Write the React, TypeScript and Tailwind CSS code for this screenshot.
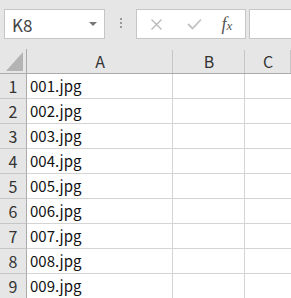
const rows = ["001.jpg", "002.jpg", "003.jpg", "004.jpg", "005.jpg", "006.jpg", "007.jpg", "008.jpg", "009.jpg"];

const font = { fontFamily: '"Noto Sans CJK JP", "Noto Sans", sans-serif' };

export default function App() {
  return (
    <div className="w-[291px] h-[298px] overflow-hidden bg-white text-[#222]" style={font}>
      {/* formula bar */}
      <div className="h-[49px] bg-[#e6e6e6] flex items-start pt-[9px] pl-[4px]">
        <div className="w-[101px] h-[30px] bg-white border border-[#c6c6c6] flex items-center justify-between pl-[7px] pr-[6px]">
          <span className="text-[17px] text-[#444] leading-none">K8</span>
          <svg width="10" height="6" viewBox="0 0 10 6">
            <path d="M1 1h8L5 5z" fill="#777" />
          </svg>
        </div>
        <div className="w-[31px] flex flex-col items-center gap-[2px] pt-[9px]">
          <span className="w-[2px] h-[2px] bg-[#9a9a9a]" />
          <span className="w-[2px] h-[2px] bg-[#9a9a9a]" />
          <span className="w-[2px] h-[2px] bg-[#9a9a9a]" />
        </div>
        <div className="w-[110px] h-[30px] bg-white border border-[#c6c6c6] flex items-center">
          <div className="w-[38px] flex justify-center">
            <svg width="13" height="13" viewBox="0 0 13 13">
              <path d="M1.5 1.5l10 10M11.5 1.5l-10 10" stroke="#b8b8b8" strokeWidth="1.3" />
            </svg>
          </div>
          <div className="w-[38px] flex justify-center">
            <svg width="15" height="12" viewBox="0 0 15 12">
              <path d="M1 6l4.5 4.5L14 1.5" stroke="#c2c2c2" strokeWidth="1.8" fill="none" />
            </svg>
          </div>
          <div className="flex-1 flex justify-center pr-[4px]">
            <span className="italic text-[18px] text-[#555] leading-none" style={{ fontFamily: '"Liberation Serif", serif' }}>
              f<span className="text-[13px]">x</span>
            </span>
          </div>
        </div>
        <div className="ml-[3px] flex-1 h-[30px] bg-white border border-[#c6c6c6] border-r-0" />
      </div>

      {/* sheet */}
      <div className="grid grid-cols-[27px_146px_72px_1fr]">
        <div className="h-[25px] bg-[#e6e6e6] border-b border-r border-[#ababab] flex items-end justify-end pr-[3px] pb-[2px]">
          <svg width="17" height="19" viewBox="0 0 17 19">
            <path d="M17 0V19H0z" fill="#b4b4b4" />
          </svg>
        </div>
        {["A", "B", "C"].map((c) => (
          <div key={c} className="h-[25px] bg-[#e6e6e6] border-b border-[#ababab] relative flex items-center justify-center text-[16px] text-[#333]">
            {c}
            <span className="absolute right-0 top-[1px] bottom-0 w-px bg-[#c6c6c6]" />
          </div>
        ))}
        {rows.map((r, i) => (
          <div key={r} className="contents">
            <div className="h-[25px] bg-[#e6e6e6] border-r border-b border-[#ababab] border-b-[#c6c6c6] flex items-center justify-center text-[16px] text-[#333]">
              {i + 1}
            </div>
            <div className="h-[25px] border-r border-b border-[#d4d4d4] flex items-center pl-[3px] text-[15px] text-[#111]">
              {r}
            </div>
            <div className="h-[25px] border-r border-b border-[#d4d4d4]" />
            <div className="h-[25px] border-b border-[#d4d4d4]" />
          </div>
        ))}
      </div>
    </div>
  );
}
